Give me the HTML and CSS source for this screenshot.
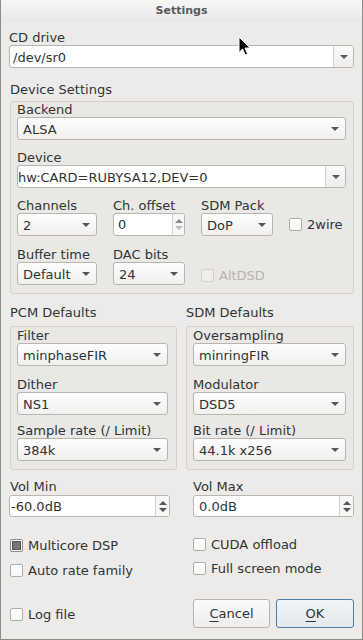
FILE: index.html
```html
<!DOCTYPE html>
<html lang="en">
<head>
  <meta charset="UTF-8">
  <title>Settings</title>
  <link rel="stylesheet" href="styles.css">
</head>
<body>
  <div class="window">
    <div class="titlebar">Settings</div>

    <div class="content">
      <div class="lbl first">CD drive</div>
      <div class="combo edit"><span class="value">/dev/sr0</span><span class="drop"></span></div>

      <div class="lbl heading">Device Settings</div>
      <div class="frame device">
        <div class="lbl top">Backend</div>
        <div class="combo"><span class="value">ALSA</span><span class="arrow"></span></div>

        <div class="lbl gap">Device</div>
        <div class="combo edit"><span class="value tight">hw:CARD=RUBYSA12,DEV=0</span><span class="drop"></span></div>

        <div class="grid row1">
          <div class="cell">
            <div class="lbl">Channels</div>
            <div class="combo"><span class="value">2</span><span class="arrow"></span></div>
          </div>
          <div class="cell">
            <div class="lbl">Ch. offset</div>
            <div class="spin"><span class="value pad4">0</span><span class="spinbtn min"><i class="up"></i><i class="down"></i></span></div>
          </div>
          <div class="cell">
            <div class="lbl">SDM Pack</div>
            <div class="combo"><span class="value">DoP</span><span class="arrow"></span></div>
          </div>
          <div class="cell check-cell">
            <div class="check"><span class="box"></span>2wire</div>
          </div>
        </div>

        <div class="grid row2">
          <div class="cell">
            <div class="lbl">Buffer time</div>
            <div class="combo"><span class="value">Default</span><span class="arrow"></span></div>
          </div>
          <div class="cell">
            <div class="lbl">DAC bits</div>
            <div class="combo"><span class="value">24</span><span class="arrow"></span></div>
          </div>
          <div class="cell check-cell">
            <div class="check disabled"><span class="box"></span>AltDSD</div>
          </div>
        </div>
      </div>

      <div class="defaults">
        <div class="col">
          <div class="lbl heading2">PCM Defaults</div>
          <div class="frame sub">
            <div class="lbl top2">Filter</div>
            <div class="combo"><span class="value">minphaseFIR</span><span class="arrow"></span></div>
            <div class="lbl gap2">Dither</div>
            <div class="combo"><span class="value">NS1</span><span class="arrow"></span></div>
            <div class="lbl gap3">Sample rate (/ Limit)</div>
            <div class="combo"><span class="value">384k</span><span class="arrow"></span></div>
          </div>
        </div>
        <div class="col">
          <div class="lbl heading2">SDM Defaults</div>
          <div class="frame sub">
            <div class="lbl top2">Oversampling</div>
            <div class="combo"><span class="value">minringFIR</span><span class="arrow"></span></div>
            <div class="lbl gap2">Modulator</div>
            <div class="combo"><span class="value">DSD5</span><span class="arrow"></span></div>
            <div class="lbl gap3">Bit rate (/ Limit)</div>
            <div class="combo"><span class="value">44.1k x256</span><span class="arrow"></span></div>
          </div>
        </div>
      </div>

      <div class="volumes">
        <div class="cell">
          <div class="lbl">Vol Min</div>
          <div class="spin vol"><span class="value pad1">-60.0dB</span><span class="spinbtn"><i class="up"></i><i class="down"></i></span></div>
        </div>
        <div class="cell">
          <div class="lbl">Vol Max</div>
          <div class="spin vol"><span class="value pad5">0.0dB</span><span class="spinbtn"><i class="up"></i><i class="down"></i></span></div>
        </div>
      </div>

      <div class="options">
        <div class="opt-col left">
          <div class="check"><span class="box partial"></span>Multicore DSP</div>
          <div class="check"><span class="box"></span>Auto rate family</div>
        </div>
        <div class="opt-col right">
          <div class="check"><span class="box"></span>CUDA offload</div>
          <div class="check"><span class="box"></span>Full screen mode</div>
        </div>
      </div>

      <div class="footer">
        <div class="check log"><span class="box"></span>Log file</div>
        <div class="buttons">
          <button class="btn"><u>C</u>ancel</button>
          <button class="btn default"><u>O</u>K</button>
        </div>
      </div>
    </div>

    <!-- mouse pointer over the dialog -->
    <svg class="cursor" width="13" height="21" viewBox="0 0 13 21">
      <path d="M1 1 V16.5 L4.6 13 L7.2 19 L9.6 18 L7 12 H12 Z" fill="#000" stroke="#fff" stroke-width="1" stroke-linejoin="round"/>
    </svg>
  </div>
</body>
</html>
```

FILE: styles.css
```css
* {
  box-sizing: border-box;
}
body {
  margin: 0;
  font-family: "DejaVu Sans", sans-serif;
  font-size: 13px;
  color: #2e3436;
  background: #fff;
}
.window {
  position: relative;
  width: 363px;
  height: 640px;
  background: #edebe9;
  border: 1px solid #8f8d8a;
  border-top: none;
  display: flex;
  flex-direction: column;
}
.titlebar {
  height: 22px;
  line-height: 22px;
  text-align: center;
  font-size: 11px;
  font-weight: bold;
  color: #535b61;
  background: linear-gradient(#f7f6f5, #e9e8e6);
}
.content {
  flex: 1;
  padding: 0 8px 11px 8px;
  display: flex;
  flex-direction: column;
}

/* labels */
.lbl {
  line-height: 14px;
  height: 14px;
  white-space: nowrap;
}
.lbl.first { margin-top: 9px; }
.lbl.heading { margin-top: 15px; margin-left: 1px; }
.lbl.top { margin-top: 1px; }
.lbl.gap { margin-top: 11px; }
.lbl.heading2 { margin-top: 12px; }
.lbl.top2 { margin-top: 2px; }
.lbl.gap2 { margin-top: 12px; }
.lbl.gap3 { margin-top: 9px; }

/* frames */
.frame {
  border: 1px solid #d3d0cb;
  border-radius: 3px;
  background: #eae8e5;
}
.frame.device {
  margin: 4px 0 0 1px;
  padding: 0 7px 8px 6px;
}
.frame.sub {
  margin-top: 6px;
  padding: 0 7px 8px 6px;
}

/* combo boxes */
.combo {
  display: flex;
  height: 23px;
  border: 1px solid #b9b6b1;
  border-radius: 3px;
  background: linear-gradient(#fdfdfd, #f1f0ef);
  overflow: hidden;
}
.combo .value {
  flex: 1;
  padding: 4px 0 0 5px;
  line-height: 15px;
  white-space: nowrap;
}
.combo .arrow {
  width: 8px;
  margin: 9px 6px 0 0;
  height: 0;
  border-left: 4px solid transparent;
  border-right: 4px solid transparent;
  border-top: 4px solid #555753;
}
.combo.edit {
  background: #fff;
}
.combo.edit .value {
  padding-left: 3px;
}
.combo.edit .value.tight {
  padding-left: 0;
}
.combo .drop {
  width: 20px;
  border-left: 1px solid #d2d0cc;
  background: linear-gradient(#f9f9f8, #efeeec);
  position: relative;
}
.combo .drop::after {
  content: "";
  position: absolute;
  left: 6px;
  top: 9px;
  border-left: 4px solid transparent;
  border-right: 4px solid transparent;
  border-top: 4px solid #555753;
}

/* spin boxes */
.spin {
  display: flex;
  height: 22px;
  margin-top: 1px;
  border: 1px solid #b9b6b1;
  border-radius: 3px;
  background: #fff;
  overflow: hidden;
}
.spin .value {
  flex: 1;
  padding-top: 3px;
  line-height: 15px;
}
.pad1 { padding-left: 1px; }
.pad4 { padding-left: 4px; }
.pad5 { padding-left: 5px; }
.spinbtn {
  width: 12px;
  border-left: 1px solid #d2d0cc;
  background: #f6f6f5;
  display: flex;
  flex-direction: column;
  align-items: center;
  justify-content: center;
  gap: 3px;
}
.spin.vol .spinbtn {
  width: 14px;
}
.spinbtn i {
  width: 0;
  height: 0;
  border-left: 4px solid transparent;
  border-right: 4px solid transparent;
}
.spinbtn .up { border-bottom: 4px solid #505456; }
.spinbtn .down { border-top: 4px solid #505456; }
.spinbtn.min .up { border-bottom-color: #86898b; }
.spinbtn.min .down { border-top-color: #bdbcba; }

/* device grid */
.grid {
  display: grid;
  grid-template-columns: 80px 72px 72px 1fr;
  column-gap: 16px;
}
.grid.row1 { margin-top: 11px; }
.grid.row2 { margin-top: 12px; }
.grid.row1 .cell:nth-child(2) .spin { height: 23px; margin-top: 0; }
.check-cell {
  display: flex;
  align-items: flex-end;
}
.check-cell .check {
  height: 23px;
}
.row2 .check-cell .check {
  height: 19px;
}

/* check boxes */
.check {
  display: flex;
  align-items: center;
  gap: 5px;
  height: 17px;
  white-space: nowrap;
}
.box {
  width: 13px;
  height: 13px;
  border: 1px solid #b1aeaa;
  border-radius: 2px;
  background: linear-gradient(#fff, #f7f7f6);
  flex: none;
  display: flex;
  align-items: center;
  justify-content: center;
}
.box.partial {
  border-color: #8c8a87;
}
.box.partial::after {
  content: "";
  width: 7px;
  height: 7px;
  background: #767676;
  border: 1px solid #555;
}
.check.disabled {
  color: #b6b3af;
}
.check.disabled .box {
  border-color: #d3d0cc;
  background: #efeeec;
}

/* pcm / sdm */
.defaults {
  display: grid;
  grid-template-columns: 167px 168px;
  column-gap: 9px;
  margin-left: 1px;
}
.defaults .col:first-child .lbl.heading2 {
  margin-left: 0;
}
.defaults .col:last-child .frame.sub {
  padding-right: 7px;
}
.defaults .col:first-child .frame.sub {
  padding-right: 8px;
}

/* volume */
.volumes {
  display: grid;
  grid-template-columns: 161px 161px;
  column-gap: 23px;
  margin-top: 10px;
}
.volumes .cell:first-child .lbl {
  margin-left: 1px;
}

/* options */
.options {
  display: grid;
  grid-template-columns: 161px 161px;
  column-gap: 23px;
}
.opt-col {
  display: flex;
  flex-direction: column;
}
.opt-col.left {
  padding: 20px 0 0 1px;
  gap: 8px;
}
.opt-col.right {
  padding-top: 19px;
  gap: 7px;
}

/* footer */
.footer {
  margin-top: auto;
  display: flex;
  align-items: center;
  justify-content: space-between;
}
.check.log {
  margin: 2px 0 0 1px;
}
.buttons {
  display: flex;
  gap: 6px;
}
.btn {
  font-family: "DejaVu Sans", sans-serif;
  font-size: 13px;
  color: #2e3436;
  height: 29px;
  width: 77px;
  padding: 0;
  border: 1px solid #b6b3ae;
  border-radius: 3px;
  background: linear-gradient(#fbfbfb, #eeedeb);
}
.btn.default {
  width: 78px;
  border-color: #4c7fa6;
  background: linear-gradient(#f3f6f8, #e3e8ec);
}
.btn u {
  text-decoration-thickness: 1px;
  text-underline-offset: 3px;
}

.cursor {
  position: absolute;
  left: 237px;
  top: 36px;
}
```
